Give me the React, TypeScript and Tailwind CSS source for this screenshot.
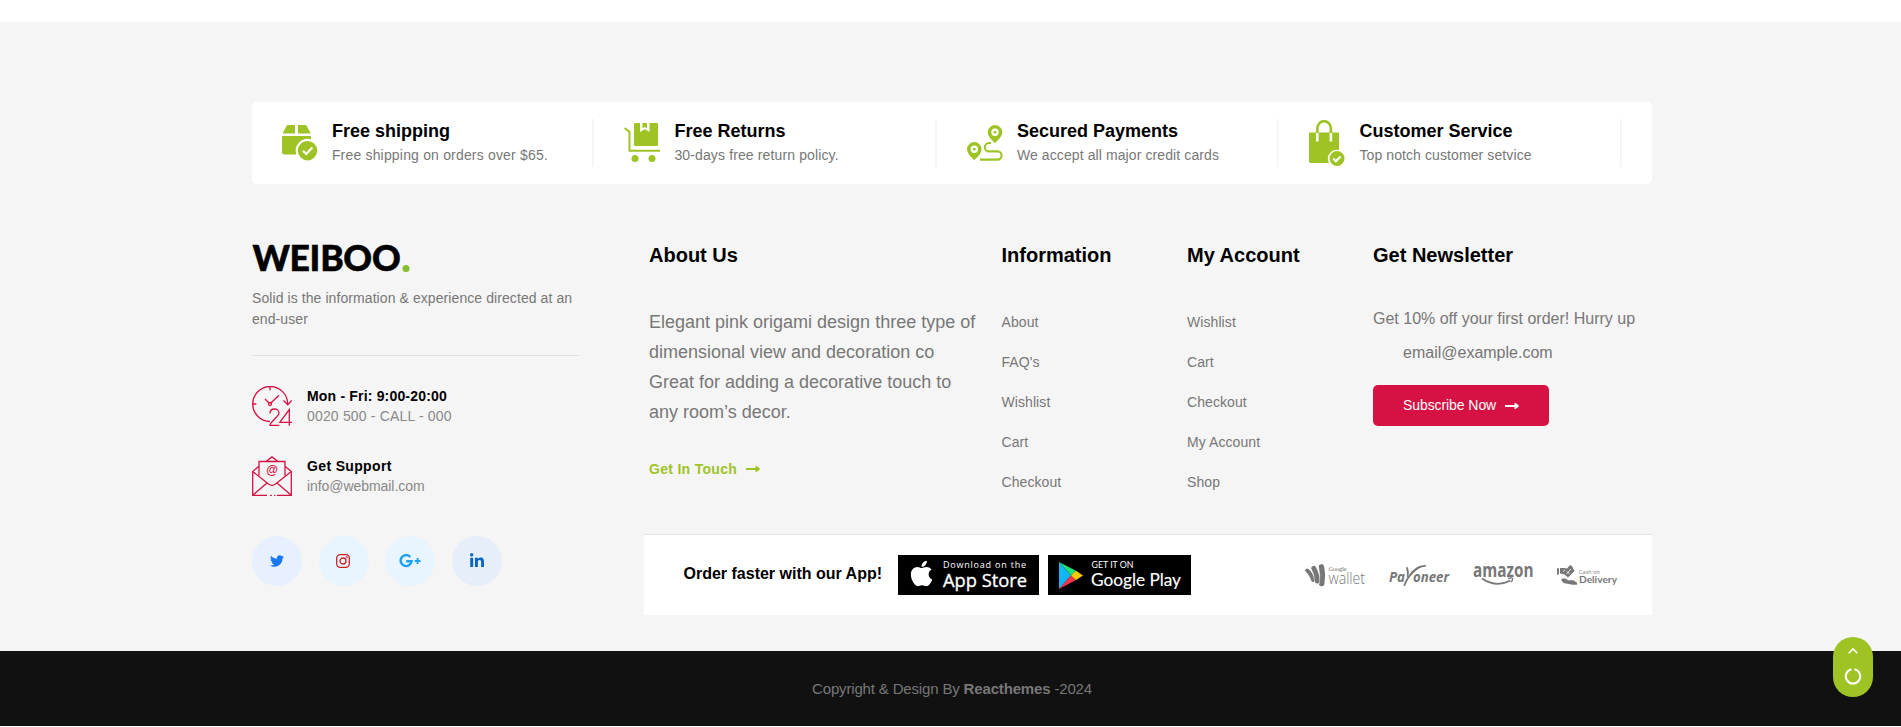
import React from "react";
import { FaTwitter, FaLinkedinIn, FaApple } from "react-icons/fa";

const GREEN = "#9dc424";
const RED = "#d51243";

function BoxIcon() {
  return (
    <svg width="36" height="36" viewBox="0 0 36 36" fill={GREEN}>
      <path d="M6.2 0H13v8.500H.5L4.3 1.200Q4.900 0 6.200 0zM16 0h7q1.300 0 1.900 1.200L28.800 8.500H16z" />
      <path d="M0 11h29v3.200A12 12 0 0 0 14.300 29.500H2.500A2.500 2.500 0 0 1 0 27z" />
      <circle cx="25.500" cy="25.700" r="9.700" />
      <path d="M21 25.700l3.300 3.300 6-6.500" fill="none" stroke="#fff" strokeWidth="2.200" />
    </svg>
  );
}

function CartIcon() {
  return (
    <svg width="36" height="40" viewBox="0 0 36 40" fill={GREEN}>
      <path d="M11.500 0H16v9l4.800-2.800L25.500 9V0H33q1 0 1 1v21q0 1-1 1H11q-1 0-1-1V1q0-1 1-1z" />
      <path d="M18.500 0h4.500v5.300l-2.200-1.300-2.300 1.300z" />
      <path d="M.6 5l4.900 4v18.700H36" fill="none" stroke={GREEN} strokeWidth="2" />
      <circle cx="11" cy="35.500" r="3.500" />
      <circle cx="28" cy="35.500" r="3.500" />
    </svg>
  );
}

function RouteIcon() {
  return (
    <svg width="36" height="36" viewBox="0 0 36 36" fill={GREEN}>
      <path fillRule="evenodd" d="M28 0a7.300 7.300 0 0 1 7.300 7.300c0 4-4.300 8-7.300 11-3-3-7.300-7-7.300-11A7.300 7.300 0 0 1 28 0zm0 3.500a3.700 3.700 0 1 0 0 7.400 3.700 3.700 0 0 0 0-7.400z" />
      <circle cx="28" cy="7.200" r="1.400" />
      <path fillRule="evenodd" d="M7.300 17a7.300 7.300 0 0 1 7.300 7.300c0 4-4.300 8-7.300 11-3-3-7.300-7-7.300-11A7.300 7.300 0 0 1 7.300 17zm0 3.500a3.700 3.700 0 1 0 0 7.400 3.700 3.700 0 0 0 0-7.400z" />
      <circle cx="7.300" cy="24.200" r="1.400" />
      <path d="M24 18h-2a4.200 4.200 0 0 0 0 8.400h8.500a4.100 4.100 0 0 1 0 8.200H13" fill="none" stroke={GREEN} strokeWidth="2.100" />
    </svg>
  );
}

function BagIcon() {
  return (
    <svg width="36" height="46" viewBox="0 0 36 46" fill={GREEN}>
      <path d="M1 12.500h28q1 0 1 1V30a9 9 0 0 0-10 13H1.500Q0 43 0 41.500v-28q0-1 1-1z" />
      <path d="M8.300 13V8.500a6.800 7.300 0 0 1 13.600 0V13" fill="none" stroke={GREEN} strokeWidth="2.600" />
      <path d="M8.300 13v8.500M21.900 13v8.500" fill="none" stroke="#fff" strokeWidth="2.600" />
      <circle cx="28" cy="38.500" r="7.500" />
      <path d="M24.200 38.500l2.700 2.700 4.600-4.800" fill="none" stroke="#fff" strokeWidth="2.200" />
    </svg>
  );
}

function ClockIcon() {
  return (
    <svg width="40" height="40" viewBox="0 0 40 40" fill="none" stroke={RED} strokeWidth="1.300">
      <path d="M18 35.500A17.500 17.500 0 1 1 35.700 18" />
      <path d="M31.500 14.500l4.300 4.300 3.800-4.300M18 .8v3.500M.8 18h3.500" />
      <path d="M13 13l4.200 4.200M18.900 17L27 9.200" />
      <circle cx="18" cy="18" r="1.500" />
      <path d="M18 27.500c0-3 2-4.500 4.500-4.500s4.500 1.800 4.500 4c0 3.500-9 9-9 12.300h9.300M37.300 39.800V23.500l-9.500 12.800H40" />
    </svg>
  );
}

function MailIcon() {
  return (
    <svg width="40" height="40" viewBox="0 0 40 40" fill="none" stroke={RED} strokeWidth="1.300">
      <path d="M7 19.800V5.500h26v14.300M14 5.500L20 .9l6 4.600M7 10.300L.7 15.500v23.800H15M25 39.300h14.300V15.500L33 10.300M18 39.300h1.800M22 39.300h1.400" />
      <path d="M.7 15.500L16.500 28c2 1.500 5 1.500 7 0l15.800-12.500M.7 39.300L15 27M39.300 39.300L25 27" />
      <text x="20" y="18.300" textAnchor="middle" fontSize="12" fill={RED} stroke="none" fontWeight="700" fontFamily="Liberation Sans, sans-serif">@</text>
    </svg>
  );
}

function Arrow({ className }: { className?: string }) {
  return (
    <svg width="14" height="8" viewBox="0 0 14 8" className={className} fill="currentColor">
      <path d="M0 3h9.500V.8q3 .8 4.500 3.200-1.500 2.400-4.500 3.200V5H0z" />
    </svg>
  );
}

const features = [
  { title: "Free shipping", text: "Free shipping on orders over $65.", Icon: BoxIcon, tracking: "tracking-[0.18px]" },
  { title: "Free Returns", text: "30-days free return policy.", Icon: CartIcon, tracking: "tracking-[0.13px]" },
  { title: "Secured Payments", text: "We accept all major credit cards", Icon: RouteIcon, tracking: "tracking-[0.1px]" },
  { title: "Customer Service", text: "Top notch customer setvice", Icon: BagIcon, tracking: "tracking-[0.1px]" },
];

function Links({ title, items, className }: { title: string; items: string[]; className: string }) {
  return (
    <div className={className}>
      <h3 className="text-[20px] leading-[30px] font-bold text-black">{title}</h3>
      <ul className="mt-[37px]">
        {items.map((i) => (
          <li key={i} className="h-10 text-[14px] leading-[30px] tracking-[0.08px]">{i}</li>
        ))}
      </ul>
    </div>
  );
}

function Logo() {
  return (
    <svg width="160" height="30" viewBox="0 0 160 30" className="block overflow-visible">
      <g fontFamily="Lato, sans-serif" fontWeight="900" fontSize="35.500" fill="#000" stroke="#000" strokeWidth="0.500">
        <text x="0.500" y="27" textLength="37.500" lengthAdjust="spacingAndGlyphs">W</text>
        <text x="37.500" y="27">E</text>
        <text x="57.500" y="27">I</text>
        <text x="68.300" y="27">B</text>
        <text x="91.200" y="27">O</text>
        <text x="120" y="27">O</text>
      </g>
      <circle cx="154" cy="24.500" r="3.500" fill="#84bd32" />
    </svg>
  );
}

function AppStore() {
  return (
    <div className="flex h-10 w-[141px] items-center bg-black">
      <FaApple className="mb-[3px] ml-[9px] text-[29px] text-white" />
      <svg width="90" height="40" viewBox="0 0 90 40" className="ml-[4px] overflow-visible" fill="#fff">
        <text x="3" y="13.300" fontSize="9" fontFamily="Open Sans, sans-serif" fontWeight="500" textLength="83">Download on the</text>
        <text x="3" y="31.700" fontSize="18.500" fontFamily="Open Sans, sans-serif" fontWeight="400" stroke="#fff" strokeWidth="0.350" textLength="84" lengthAdjust="spacingAndGlyphs">App Store</text>
      </svg>
    </div>
  );
}

function GooglePlay() {
  return (
    <div className="h-10 w-[143px] bg-black">
      <svg width="143" height="40" viewBox="0 0 143 40">
        <path d="M11 7v27l12-13.500z" fill="#12b5f5" />
        <path d="M11 7l12 13.500 5-4.700z" fill="#1fe07a" />
        <path d="M11 34l12-13.500 5 4.600z" fill="#f63448" />
        <path d="M28 15.800l7 4.600-7 4.700-5-4.600z" fill="#fecb0b" />
        <g fill="#fff" fontFamily="Lato, sans-serif">
          <text x="43.500" y="13.200" fontSize="8.500" textLength="42" lengthAdjust="spacingAndGlyphs">GET IT ON</text>
          <text x="43" y="30.500" fontSize="18" textLength="90" lengthAdjust="spacingAndGlyphs" stroke="#fff" strokeWidth="0.150">Google Play</text>
        </g>
      </svg>
    </div>
  );
}

function Wallet() {
  return (
    <svg width="60" height="24" viewBox="0 0 60 24" fill="#777" className="overflow-visible">
      <g fill="none" stroke="#777" strokeLinecap="round">
        <path d="M2.200 7.500q3.300 2.500 6 9.500" strokeWidth="4" />
        <path d="M8.800 5.500q3 5 3.500 12.500" strokeWidth="5" />
        <path d="M16.500 4q1.700 8 .2 16.500" strokeWidth="5.500" />
      </g>
      <g fill="none" stroke="#fff" strokeWidth="0.500">
        <path d="M6 5.500q3.500 6 3.500 13M13.500 4q2 8 1 17" />
      </g>
      <text x="23.500" y="7.500" fontSize="7" fontFamily="Liberation Serif, serif" textLength="18">Google</text>
      <text x="23.500" y="20.800" fontSize="16.500" fontFamily="Open Sans, sans-serif" fontWeight="300" textLength="36.500" lengthAdjust="spacingAndGlyphs">wallet</text>
    </svg>
  );
}

function Payoneer() {
  return (
    <svg width="60" height="24" viewBox="0 0 60 24" fill="#777" className="overflow-visible">
      <g fontFamily="Open Sans, sans-serif" fontStyle="italic" fontWeight="700" fontSize="13.500">
        <text x="0" y="18.500" textLength="16" lengthAdjust="spacingAndGlyphs">Pa</text>
        <text x="24" y="18.500" textLength="36" lengthAdjust="spacingAndGlyphs">oneer</text>
      </g>
      <path d="M17 4l2 .5q1.500 4 .3 9.500l-1.300.5q.3-6-1-10.500z" />
      <path d="M14.500 22.500C18 12.500 26 1.500 36.500 2q1 .5.500 1.500C28 4 20 13 16.300 22.500q-1 1-1.800 0z" />
    </svg>
  );
}

function Amazon() {
  return (
    <svg width="60" height="24" viewBox="0 0 60 24" fill="#777" className="overflow-visible">
      <text x="0" y="13.500" fontSize="19" fontFamily="Open Sans, sans-serif" fontWeight="700" textLength="60.500" lengthAdjust="spacingAndGlyphs">amazon</text>
      <path d="M9 15.500q14 9.500 28.500 2" fill="none" stroke="#777" strokeWidth="1.800" />
      <path d="M35 15.500q4-1 4.500-.2t-1.200 4" fill="none" stroke="#777" strokeWidth="1.300" />
    </svg>
  );
}

function CashOnDelivery() {
  return (
    <svg width="60" height="24" viewBox="0 0 60 24" fill="#777" className="overflow-visible">
      <path d="M0 5l2 .5V11l-2 1z" />
      <path d="M3 5h4l3 .5 3-3.500 2 1 2.500 5L11 14.500 7.500 11.500 3 10.500z" />
      <path d="M9.500 11l4.500-5M12.500 11l-2.500-2.500M6 8.500l2-1.500" stroke="#fff" strokeWidth="0.800" fill="none" />
      <path d="M4.500 15.500h4l2.500 1.800h5.500l3.500 2.500v2h-4.500l-9-1.800-2-2.500z" />
      <text x="22" y="10.500" fontSize="5.200" fontFamily="Open Sans, sans-serif" textLength="21" lengthAdjust="spacingAndGlyphs">Cash on</text>
      <text x="22" y="20" fontSize="10.300" fontFamily="Lato, sans-serif" fontWeight="700" textLength="38" lengthAdjust="spacingAndGlyphs">Delivery</text>
    </svg>
  );
}

export default function App() {
  return (
    <div className="relative h-[727px] overflow-hidden bg-white pt-[22px] font-['Liberation_Sans',Arial,sans-serif] text-[#777]">
      <footer className="h-[629px] bg-[#f5f5f5] pt-20">
        <div className="ml-[252px] w-[1400px]">
          <div className="grid h-[82px] grid-cols-4 gap-[30px] rounded-[5px] bg-white pt-[17px] pr-[30.5px] pl-[29.5px]">
            {features.map(({ title, text, Icon, tracking }) => (
              <div key={title} className="flex h-12 items-center border-r-2 border-[#f5f5f5]">
                <Icon />
                <div className="ml-[14.4px]">
                  <h4 className="text-[18px] leading-6 font-bold text-black">{title}</h4>
                  <p className={"text-[14px] leading-6 " + tracking}>{text}</p>
                </div>
              </div>
            ))}
          </div>

          <div className="mt-[56px] flex">
            <div className="w-[327px] shrink-0 pt-[4px]">
              <Logo />
              <p className="mt-[14px] text-[14px] leading-[21px] tracking-[0.08px]">
                Solid is the information &amp; experience directed at an
                <br />
                end-user
              </p>
              <div className="mt-[25px] border-t border-[#e2e2e2]" />
              <div className="mt-[30px] flex h-10 items-center gap-[15px]">
                <ClockIcon />
                <div>
                  <p className="text-[14px] leading-5 font-bold tracking-[0.18px] text-black">Mon - Fri: 9:00-20:00</p>
                  <p className="text-[14px] leading-5 tracking-[0.17px] text-[#888]">0020 500 - CALL - 000</p>
                </div>
              </div>
              <div className="mt-[30px] flex h-10 items-center gap-[15px]">
                <MailIcon />
                <div>
                  <p className="text-[14px] leading-5 font-bold tracking-[0.35px] text-black">Get Support</p>
                  <p className="text-[14px] leading-5 tracking-[-0.06px] text-[#888]">info@webmail.com</p>
                </div>
              </div>
              <div className="mt-10 flex gap-[16.67px]">
                <span className="flex size-[50px] items-center justify-center rounded-full bg-[#e6f0fe] text-[14px] text-[#1877f2]"><FaTwitter className="mr-px" /></span>
                <span className="flex size-[50px] items-center justify-center rounded-full bg-[#e8f4fe]">
                  <svg width="14" height="14" viewBox="0 0 14 14" fill="none" stroke="#cd2027" strokeWidth="1.300" className="mr-px">
                    <rect x=".7" y=".7" width="12.600" height="12.600" rx="3.500" />
                    <circle cx="7" cy="7" r="3" />
                    <circle cx="10.700" cy="3.300" r=".3" />
                  </svg>
                </span>
                <span className="flex size-[50px] items-center justify-center rounded-full bg-[#e8f4fe]">
                  <svg width="22" height="14" viewBox="0 0 22 14" fill="none" stroke="#1da1f2" strokeWidth="2.400">
                    <path d="M11.300 3A5.500 5.500 0 1 0 12.600 7.300H7.200" />
                    <path d="M15.700 7h5.800M18.600 4v6" strokeWidth="1.800" />
                  </svg>
                </span>
                <span className="flex size-[50px] items-center justify-center rounded-full bg-[#e6eef9] text-[16px] text-[#0a66c2]"><FaLinkedinIn /></span>
              </div>
            </div>

            <div className="ml-[65px] w-[1008px]">
              <div className="flex h-[294px] pl-[5px]">
                <div className="w-[352.500px]">
                  <h3 className="text-[20px] leading-[30px] font-bold text-black">About Us</h3>
                  <p className="mt-[37px] text-[18px] leading-[30px] whitespace-nowrap">
                    Elegant pink origami design three type of
                    <br />
                    dimensional view and decoration co
                    <br />
                    Great for adding a decorative touch to
                    <br />
                    any room’s decor.
                  </p>
                  <a className="mt-[32px] flex items-center text-[14px] leading-5 font-bold tracking-[0.3px] text-[#9dc424]">
                    Get In Touch <Arrow className="ml-[9px]" />
                  </a>
                </div>
                <Links className="w-[185.500px]" title="Information" items={["About", "FAQ's", "Wishlist", "Cart", "Checkout"]} />
                <Links className="w-[186px]" title="My Account" items={["Wishlist", "Cart", "Checkout", "My Account", "Shop"]} />
                <div>
                  <h3 className="text-[20px] leading-[30px] font-bold text-black">Get Newsletter</h3>
                  <p className="mt-[37px] text-[16px] leading-6 whitespace-nowrap">Get 10% off your first order! Hurry up</p>
                  <p className="mt-[10px] pl-[30px] text-[16px] leading-6 text-[#757575]">email@example.com</p>
                  <button className="mt-[20px] -ml-[0.5px] flex h-[41px] w-[176px] items-center rounded-[5px] bg-[#d51243] pl-[30.500px] text-[14px] tracking-[-0.08px] text-white">
                    Subscribe Now <Arrow className="ml-[9px]" />
                  </button>
                </div>
              </div>
              <div className="flex h-[81px] items-center border-t border-[#e2e2e2] bg-white pl-[39.5px]">
                <span className="mb-[2px] w-[214.5px] text-[16px] font-bold text-black">Order faster with our App!</span>
                <AppStore />
                <div className="w-[9px]" />
                <GooglePlay />
                <div className="ml-[114px] flex gap-6">
                  <Wallet />
                  <Payoneer />
                  <Amazon />
                  <CashOnDelivery />
                </div>
              </div>
            </div>
          </div>
        </div>
      </footer>
      <div className="flex h-[75px] items-center justify-center bg-[#111] pt-[2px] pl-[3px] text-[15px] tracking-[-0.16px]">
        <p>Copyright &amp; Design By <b>Reacthemes</b> -2024</p>
      </div>
      <div className="absolute top-[637px] left-[1833px] flex h-[60px] w-10 flex-col items-center rounded-full bg-[#9dc424]">
        <svg width="40" height="60" viewBox="0 0 40 60" fill="none" stroke="#fff">
          <path d="M15.700 16.200l4.300-4.300 4.300 4.300" strokeWidth="1.500" />
          <path d="M21.500 32.300a7.200 7.200 0 1 1-3 0" strokeWidth="2" />
        </svg>
      </div>
    </div>
  );
}
